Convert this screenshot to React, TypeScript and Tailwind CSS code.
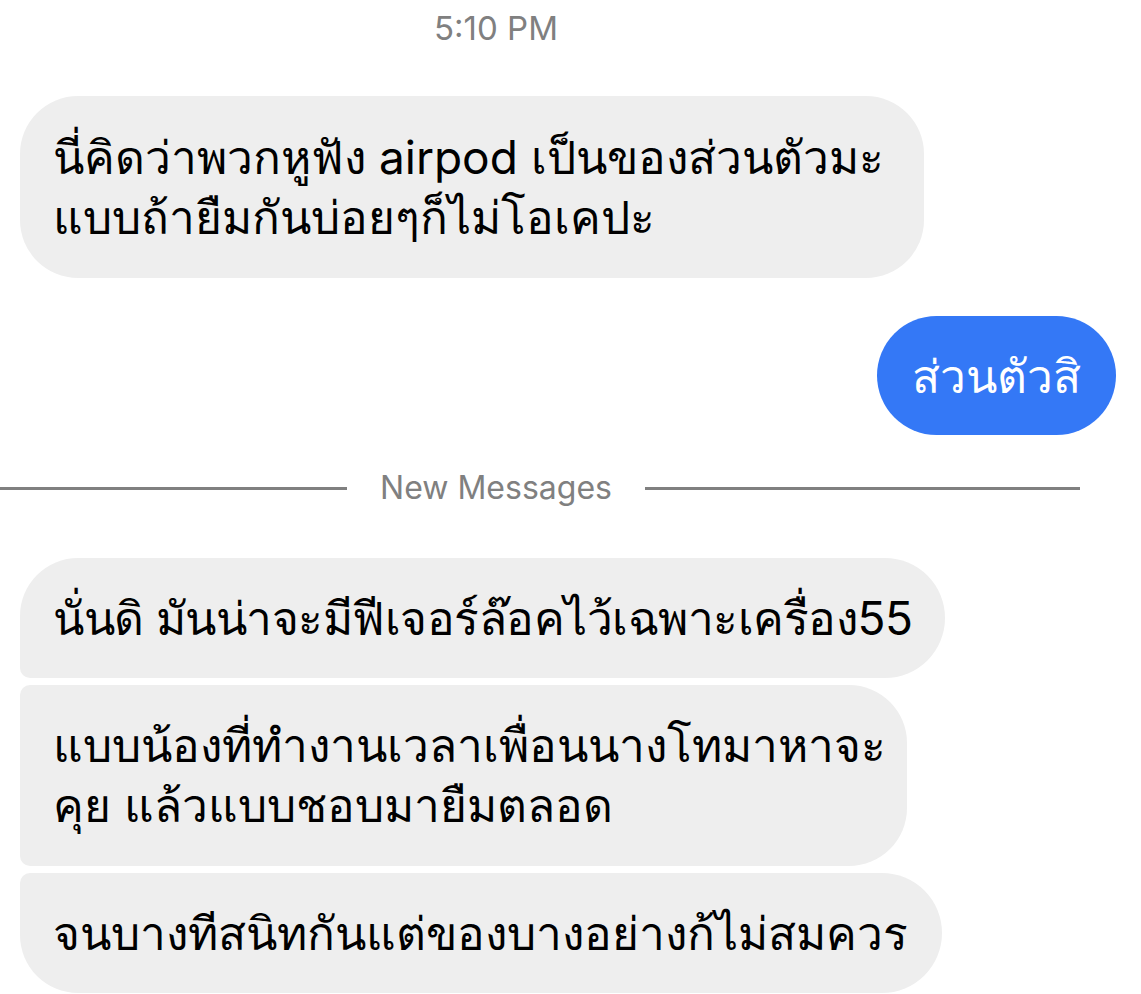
export default function App() {
  const gray = "bg-[#eeeeee] text-black";
  return (
    <div className="w-[1141px] h-[994px] overflow-hidden bg-white font-['Inter','Noto_Sans',sans-serif] flex flex-col">
      <div className="w-[992px] flex justify-center pt-[8px] h-[96px] shrink-0">
        <span className="text-[33px] leading-[40px] text-[#808080]">5:10 PM</span>
      </div>

      <div className={`${gray} ml-[20px] w-[904px] rounded-[58px] pl-[33px] py-[31px] text-[46px] leading-[60px] whitespace-nowrap`}>
        นี่คิดว่าพวกหูฟัง airpod เป็นของส่วนตัวมะ
        <br />
        แบบถ้ายืมกันบ่อยๆก็ไม่โอเคปะ
      </div>

      <div className="self-end mr-[25px] mt-[38px] w-[239px] h-[119px] rounded-[60px] bg-[#3478f6] text-white text-[46px] leading-[60px] flex items-center justify-center whitespace-nowrap">
        ส่วนตัวสิ
      </div>

      <div className="mt-[33px] h-[40px] flex items-center shrink-0">
        <div className="w-[347px] h-[3px] bg-[#808080]" />
        <span className="w-[298px] text-center text-[32px] leading-[40px] text-[#808080]">New Messages</span>
        <div className="w-[435px] h-[3px] bg-[#808080]" />
      </div>

      <div className="mt-[50px] ml-[20px] flex flex-col gap-[7px]">
        <div className={`${gray} w-[925px] h-[120px] rounded-tl-[58px] rounded-tr-[60px] rounded-br-[60px] rounded-bl-[10px] pl-[33px] flex items-center text-[46px] leading-[60px] tracking-[-0.5px] whitespace-nowrap`}>
          นั่นดิ มันน่าจะมีฟีเจอร์ล๊อคไว้เฉพาะเครื่อง55
        </div>
        <div className={`${gray} w-[887px] h-[181px] rounded-tl-[10px] rounded-tr-[58px] rounded-br-[58px] rounded-bl-[10px] pl-[33px] py-[30px] text-[46px] leading-[60px] whitespace-nowrap`}>
          แบบน้องที่ทำงานเวลาเพื่อนนางโทมาหาจะ
          <br />
          คุย แล้วแบบชอบมายืมตลอด
        </div>
        <div className={`${gray} w-[922px] h-[120px] rounded-tl-[10px] rounded-tr-[60px] rounded-br-[60px] rounded-bl-[58px] pl-[33px] flex items-center text-[46px] leading-[60px] whitespace-nowrap`}>
          จนบางทีสนิทกันแต่ของบางอย่างก้ไม่สมควร
        </div>
      </div>
    </div>
  );
}
